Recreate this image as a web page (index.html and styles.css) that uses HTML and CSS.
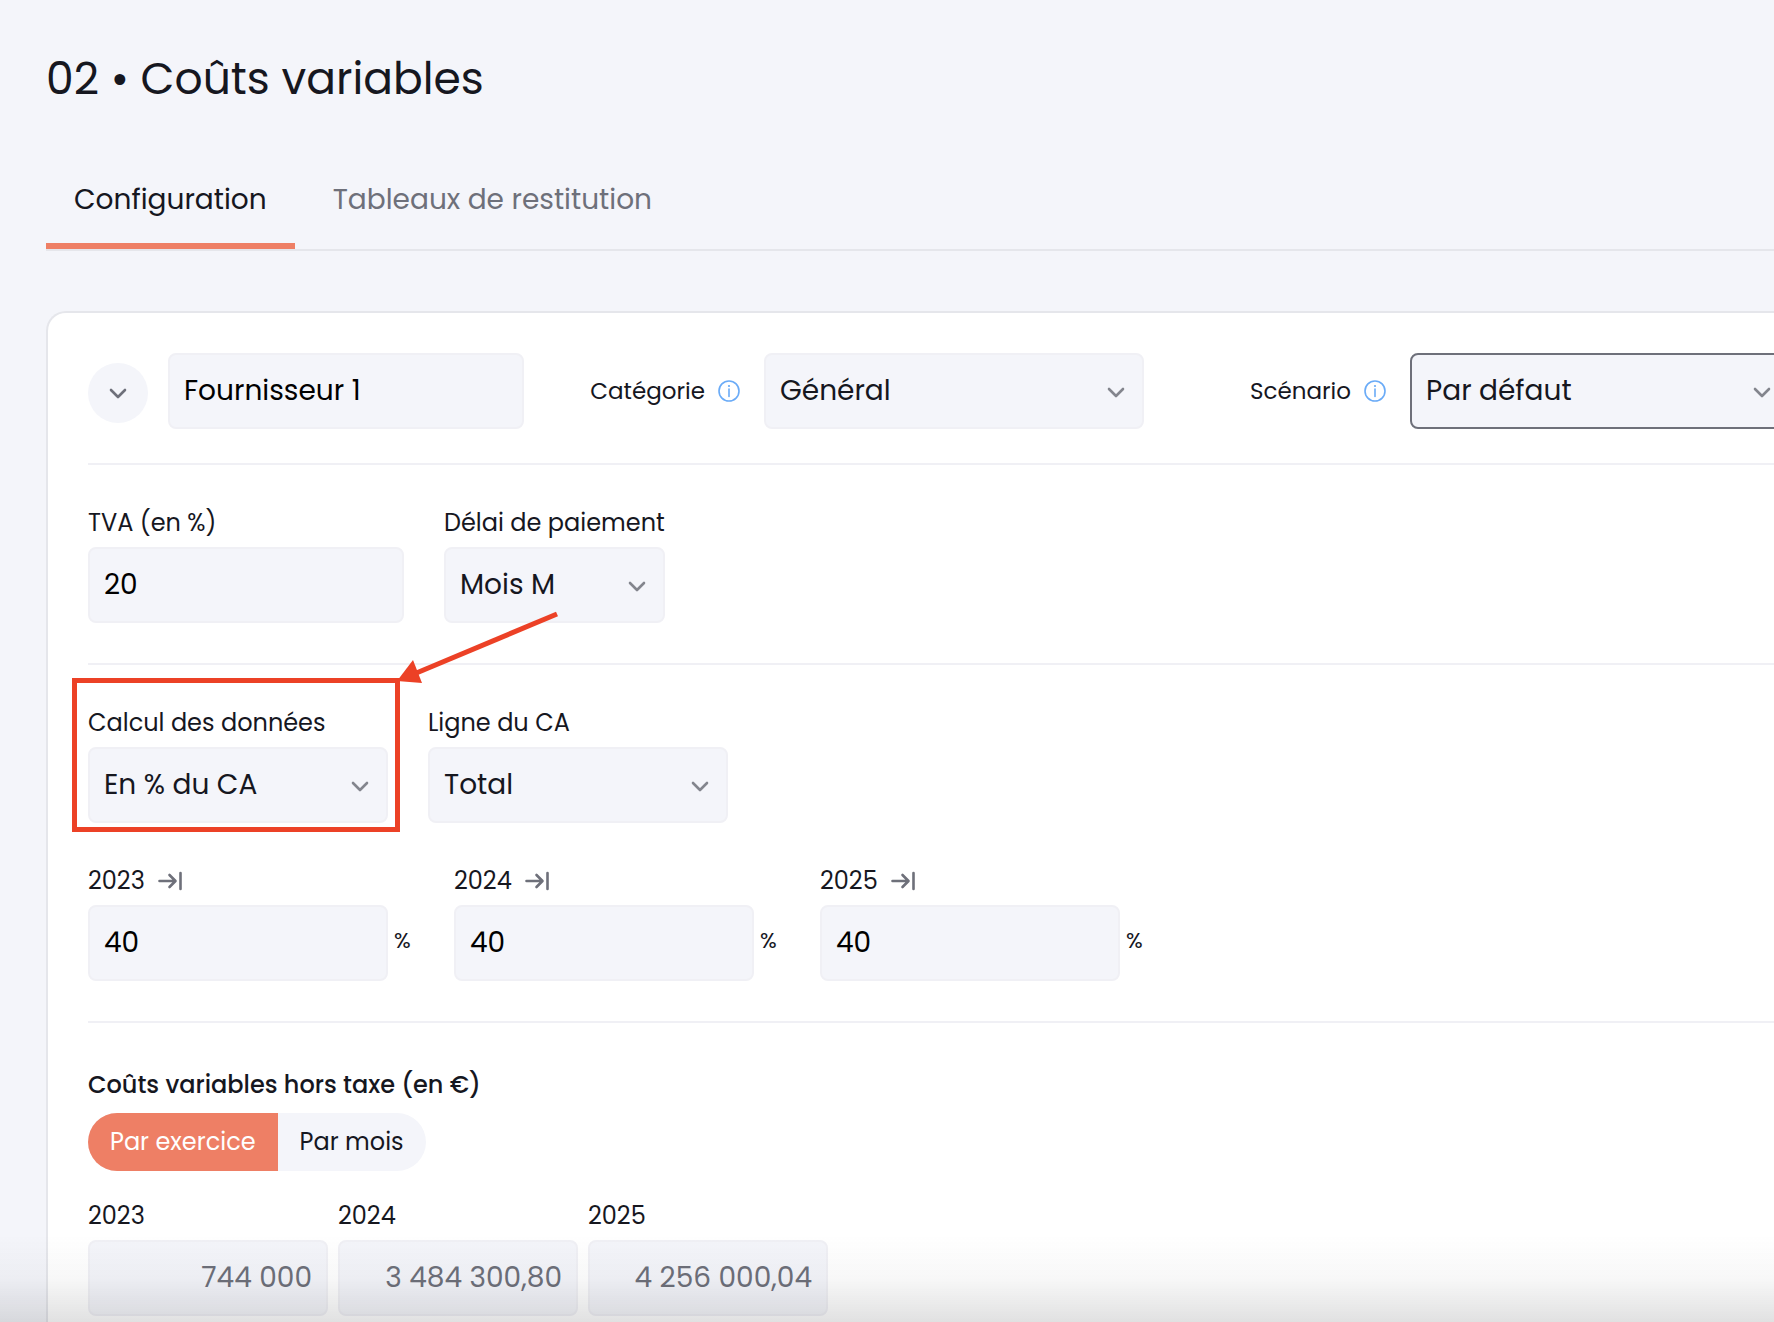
FILE: index.html
```html
<!DOCTYPE html>
<html lang="fr">
<head>
<meta charset="utf-8">
<meta name="viewport" content="width=device-width, initial-scale=1">
<title>02 • Coûts variables</title>
<link rel="stylesheet" href="styles.css">
</head>
<body>
<svg class="sprite" aria-hidden="true">
  <symbol id="chevron" viewBox="0 0 18 12"><path d="M2 2l7 7 7-7" fill="none" stroke="currentColor" stroke-width="2.6" stroke-linecap="round" stroke-linejoin="round"/></symbol>
  <symbol id="info" viewBox="0 0 24 24"><circle cx="12" cy="12" r="10" fill="none" stroke="currentColor" stroke-width="1.6"/><path d="M12 10v7.500" stroke="currentColor" stroke-width="1.600" stroke-linecap="round"/><circle cx="12" cy="7" r="1.100" fill="currentColor"/></symbol>
  <symbol id="to-end" viewBox="0 0 24 20"><path d="M1.500 10h15.500M11.500 4l6 6-6 6M22.500 2v16" fill="none" stroke="currentColor" stroke-width="2.600" stroke-linecap="round" stroke-linejoin="round"/></symbol>
</svg>
<main class="page">
  <h1 class="title">02 • Coûts variables</h1>
  <nav class="tabs">
    <a class="tab tab-active" href="#configuration" aria-current="page">Configuration</a>
    <a class="tab" href="#restitution">Tableaux de restitution</a>
  </nav>

  <section class="card" id="configuration">
    <div class="supplier">
      <button class="collapse" type="button" aria-label="Replier"><svg class="chevron"><use href="#chevron"/></svg></button>
      <input class="control w-name" type="text" value="Fournisseur 1" aria-label="Nom du fournisseur">
      <div class="inline-field inline-category">
        <label class="label" for="categorie">Catégorie</label>
        <svg class="info"><use href="#info"/></svg>
        <div class="select w-wide">
          <select class="control" id="categorie"><option>Général</option></select>
          <svg class="chevron"><use href="#chevron"/></svg>
        </div>
      </div>
      <div class="inline-field inline-scenario">
        <label class="label" for="scenario">Scénario</label>
        <svg class="info"><use href="#info"/></svg>
        <div class="select w-wide">
          <select class="control control-focus" id="scenario"><option>Par défaut</option></select>
          <svg class="chevron"><use href="#chevron"/></svg>
        </div>
      </div>
    </div>

    <div class="group">
      <div class="fields">
        <div class="field w-tva">
          <label class="label" for="tva">TVA (en %)</label>
          <input class="control" id="tva" type="text" value="20">
        </div>
        <div class="field w-delay">
          <label class="label" for="delai">Délai de paiement</label>
          <div class="select">
            <select class="control" id="delai"><option>Mois M</option></select>
            <svg class="chevron"><use href="#chevron"/></svg>
          </div>
        </div>
      </div>
    </div>

    <div class="group">
      <div class="fields">
        <div class="field w-std highlighted">
          <label class="label" for="calcul">Calcul des données</label>
          <div class="select">
            <select class="control" id="calcul"><option>En % du CA</option></select>
            <svg class="chevron"><use href="#chevron"/></svg>
          </div>
          <span class="highlight-box"></span>
          <svg class="highlight-arrow" viewBox="0 0 170 80" aria-hidden="true"><path d="M163 8L20 68" stroke="currentColor" stroke-width="5"/><path d="M3 75L19 54l9 23z" fill="currentColor"/></svg>
        </div>
        <div class="field w-std">
          <label class="label" for="ligne">Ligne du CA</label>
          <div class="select">
            <select class="control" id="ligne"><option>Total</option></select>
            <svg class="chevron"><use href="#chevron"/></svg>
          </div>
        </div>
      </div>
      <div class="rates">
        <div class="rate">
          <div class="rate-head"><label class="label" for="taux-2023">2023</label><button class="fill" type="button" aria-label="Recopier vers la droite"><svg class="to-end"><use href="#to-end"/></svg></button></div>
          <input class="control" id="taux-2023" type="text" value="40">
          <span class="unit">%</span>
        </div>
        <div class="rate">
          <div class="rate-head"><label class="label" for="taux-2024">2024</label><button class="fill" type="button" aria-label="Recopier vers la droite"><svg class="to-end"><use href="#to-end"/></svg></button></div>
          <input class="control" id="taux-2024" type="text" value="40">
          <span class="unit">%</span>
        </div>
        <div class="rate">
          <div class="rate-head"><label class="label" for="taux-2025">2025</label><button class="fill" type="button" aria-label="Recopier vers la droite"><svg class="to-end"><use href="#to-end"/></svg></button></div>
          <input class="control" id="taux-2025" type="text" value="40">
          <span class="unit">%</span>
        </div>
      </div>
    </div>

    <div class="group">
      <h2 class="subtitle">Coûts variables hors taxe (en €)</h2>
      <div class="toggle">
        <button class="toggle-item toggle-on" type="button" aria-pressed="true">Par exercice</button>
        <button class="toggle-item" type="button" aria-pressed="false">Par mois</button>
      </div>
      <div class="totals">
        <div class="field w-total">
          <label class="label" for="total-2023">2023</label>
          <input class="control amount" id="total-2023" type="text" value="744 000" readonly>
        </div>
        <div class="field w-total">
          <label class="label" for="total-2024">2024</label>
          <input class="control amount" id="total-2024" type="text" value="3 484 300,80" readonly>
        </div>
        <div class="field w-total">
          <label class="label" for="total-2025">2025</label>
          <input class="control amount" id="total-2025" type="text" value="4 256 000,04" readonly>
        </div>
      </div>
    </div>
  </section>
</main>
<div class="bottom-shade"></div>
</body>
</html>
```

FILE: styles.css
```css
:root {
  --bg: #f4f5fa;
  --ink: #16171f;
  --muted: #6e707a;
  --line: #e5e6eb;
  --soft-line: #f0f0f5;
  --accent: #ee7f65;
  --mark: #ec4126;
}

* { box-sizing: border-box; }

body {
  margin: 0;
  background: var(--bg);
  color: var(--ink);
  font-family: Poppins, Inter, sans-serif;
  font-size: 24px;
  line-height: 34px;
}

input, select, button { font: inherit; color: inherit; }

.sprite { position: absolute; width: 0; height: 0; }

.page {
  height: 100vh;
  overflow: hidden;
  padding: 45px 0 0 46px;
}

.title {
  margin: 0;
  font-size: 44px;
  line-height: 68px;
  font-weight: 400;
}

.tabs {
  display: flex;
  gap: 10px;
  margin-top: 44px;
  border-bottom: 2px solid var(--line);
}

.tab {
  padding: 23px 28px;
  border-bottom: 6px solid transparent;
  font-size: 28px;
  line-height: 40px;
  color: var(--muted);
  text-decoration: none;
}

.tab-active { color: var(--ink); border-color: var(--accent); }

.card {
  margin-top: 60px;
  padding: 40px 0 40px 40px;
  border: 2px solid var(--line);
  border-right: 0;
  border-radius: 20px 0 0 0;
  background: #fff;
}

.supplier {
  display: flex;
  align-items: center;
  padding-bottom: 34px;
}

.collapse {
  flex: none;
  display: grid;
  place-items: center;
  width: 60px;
  height: 60px;
  margin: 4px 20px 0 0;
  padding: 2px 0 0;
  border: 0;
  border-radius: 50%;
  background: var(--bg);
  color: var(--muted);
}

.chevron { width: 18px; height: 12px; }
.info { flex: none; width: 24px; height: 24px; margin: 0 23px 0 12px; color: #6aabf7; }
.to-end { display: block; width: 24px; height: 20px; }

.inline-field { flex: none; display: flex; align-items: center; justify-content: flex-end; font-size: 23px; }
.inline-category { width: 620px; }
.inline-scenario { width: 646px; }

.control {
  display: block;
  width: 100%;
  height: 76px;
  margin: 0;
  padding: 0 14px;
  border: 2px solid var(--soft-line);
  border-radius: 8px;
  outline: 0;
  background: var(--bg);
  font-size: 28px;
  appearance: none;
}

input.control { color: #000; }
.control-focus { border-color: var(--muted); }

.select { display: grid; align-items: center; }
.select > * { grid-area: 1 / 1; }
.select .chevron { justify-self: end; margin: 4px 19px 0 0; color: #83858d; pointer-events: none; }

.w-name { flex: none; width: 356px; }
.w-wide { flex: none; width: 380px; }
.w-tva { width: 316px; }
.w-delay { width: 221px; }
.w-std { width: 300px; }
.w-total { width: 240px; }

.group { padding: 41px 0 40px; border-top: 2px solid var(--soft-line); }
.fields { display: flex; gap: 40px; }
.field { display: flex; flex-direction: column; gap: 7px; }
.label { white-space: nowrap; }

.highlighted { position: relative; }

.highlight-box {
  position: absolute;
  inset: -28px -12px -9px -16px;
  border: 5px solid var(--mark);
  pointer-events: none;
}

.highlight-arrow {
  position: absolute;
  left: 306px;
  top: -100px;
  width: 170px;
  height: 80px;
  color: var(--mark);
  pointer-events: none;
}

.rates { display: flex; gap: 40px; margin-top: 41px; }

.rate {
  display: grid;
  grid-template-columns: 300px 20px;
  gap: 7px 6px;
  align-items: center;
}

.rate-head { grid-column: 1 / -1; display: flex; align-items: center; gap: 13px; }
.fill { padding: 0; border: 0; background: none; color: var(--muted); }
.unit { padding-bottom: 4px; font-size: 22px; }

.subtitle { margin: 0 0 7px; font-size: 24px; line-height: 42px; font-weight: 500; }

.toggle { display: inline-flex; overflow: hidden; border-radius: 29px; background: var(--bg); vertical-align: top; }
.toggle-item { height: 58px; padding: 0 22px; border: 0; background: none; }
.toggle-on { background: var(--accent); color: #fff; }

.totals { display: flex; gap: 10px; margin-top: 28px; }
input.amount { color: var(--muted); text-align: right; }

.bottom-shade {
  position: fixed;
  inset: auto 0 0;
  height: 88px;
  background: linear-gradient(rgba(20, 22, 26, 0), rgba(20, 22, 26, .03) 50%, rgba(20, 22, 26, .13));
  pointer-events: none;
}
```
